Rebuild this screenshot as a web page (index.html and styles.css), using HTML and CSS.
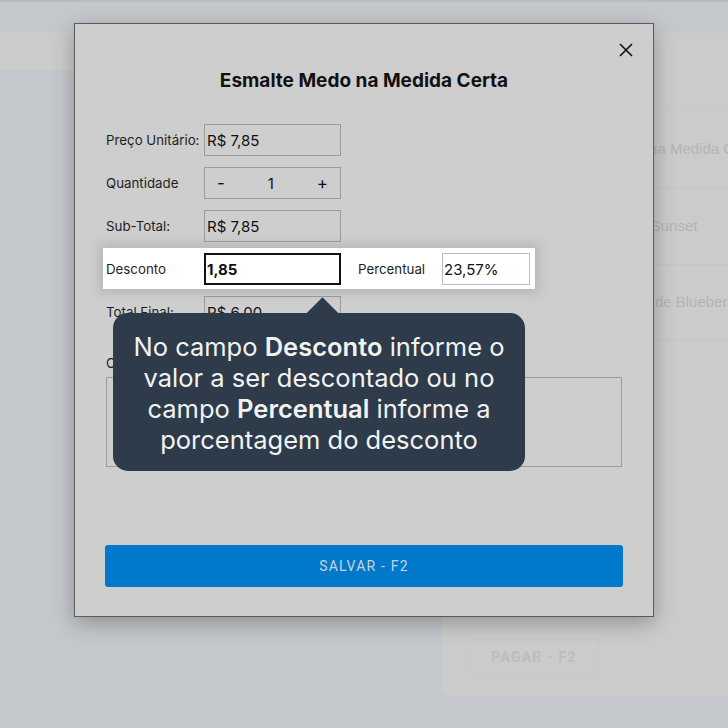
FILE: index.html
```html
<!DOCTYPE html>
<html lang="pt-BR">
<head>
    <meta charset="UTF-8">
    <meta name="viewport" content="width=device-width, initial-scale=1.0">
    <title>PDV - Desconto</title>
    <link rel="stylesheet" href="styles.css">
</head>
<body>
    <div class="topbar"></div>
    <div class="app">
        <div class="catalog">
            <div class="search"></div>
        </div>
        <aside class="cart">
            <ul class="cart-list">
                <li>Esmalte Medo na Medida Certa</li>
                <li>Esmalte Verão Sunset</li>
                <li>Esmalte Geleia de Blueberry</li>
            </ul>
            <div class="cart-footer">
                <button class="pay">PAGAR - F2</button>
            </div>
        </aside>
    </div>

    <div class="modal">
        <button class="close" aria-label="Fechar">
            <svg width="14" height="14" viewBox="0 0 14 14">
                <path d="M1 1 L13 13 M13 1 L1 13" stroke="#111" stroke-width="1.6" fill="none"/>
            </svg>
        </button>
        <h2 class="modal-title">Esmalte Medo na Medida Certa</h2>
        <div class="form">
            <div class="row">
                <label>Preço Unitário:</label>
                <input class="field" type="text" value="R$ 7,85" readonly>
            </div>
            <div class="row">
                <label>Quantidade</label>
                <div class="field qty">
                    <button>-</button>
                    <span>1</span>
                    <button>+</button>
                </div>
            </div>
            <div class="row">
                <label>Sub-Total:</label>
                <input class="field" type="text" value="R$ 7,85" readonly>
            </div>
            <div class="row row-focus">
                <label>Desconto</label>
                <input class="field field-active" type="text" value="1,85">
                <label class="label-short">Percentual</label>
                <input class="field field-small" type="text" value="23,57%">
            </div>
            <div class="row">
                <label>Total Final:</label>
                <input class="field" type="text" value="R$ 6,00" readonly>
            </div>
            <label class="notes-label">Observação</label>
            <textarea class="notes"></textarea>
        </div>
        <button class="save">SALVAR - F2</button>

        <div class="tour-tip">
            No campo <b>Desconto</b> informe o<br>
            valor a ser descontado ou no<br>
            campo <b>Percentual</b> informe a<br>
            porcentagem do desconto
        </div>
    </div>
</body>
</html>
```

FILE: styles.css
```css
body {
    margin: 0;
    width: 728px;
    height: 728px;
    overflow: hidden;
    background: #c4c7cb;
    font-family: Inter, "Liberation Sans", sans-serif;
}

.topbar {
    height: 2px;
    background: #b8bbbf;
}

/* app behind the modal */
.app {
    display: flex;
    gap: 12px;
    padding-top: 30px;
}

.catalog {
    width: 430px;
    flex: none;
}

.search {
    height: 38px;
    background: #cbcbcb;
}

.cart {
    width: 300px;
    height: 663px;
    flex: none;
    margin-top: 1px;
    padding-top: 77px;
    box-sizing: border-box;
    background: #cbcbcb;
    border-radius: 0 0 0 8px;
    display: flex;
    flex-direction: column;
    overflow: hidden;
}

.cart-list {
    list-style: none;
    margin: 0;
    padding: 0;
}

.cart-list li {
    height: 77px;
    box-sizing: border-box;
    display: flex;
    align-items: center;
    padding: 0 0 2px 107px;
    white-space: nowrap;
    font-family: "Liberation Sans", Arial, sans-serif;
    font-size: 15px;
    color: #b4b4b4;
    border-top: 1px solid #c6c6c6;
}

.cart-list li:last-child {
    border-bottom: 1px solid #c6c6c6;
}

.cart-footer {
    margin-top: auto;
    padding: 0 0 21px 26px;
}

.pay {
    width: 132px;
    height: 36px;
    background: transparent;
    border: 1px solid #c8c8c8;
    border-radius: 4px;
    font-family: Roboto, sans-serif;
    font-weight: 700;
    font-size: 14px;
    letter-spacing: 1.2px;
    color: #bdbdbd;
}

/* modal */
.modal {
    position: absolute;
    left: 74px;
    top: 23px;
    width: 580px;
    height: 594px;
    box-sizing: border-box;
    padding: 46px 30px 0;
    background: #cecece;
    border: 1px solid #5b5b5b;
    box-shadow: 0 6px 20px rgba(0, 0, 0, 0.28);
}

.close {
    position: absolute;
    top: 19px;
    right: 20px;
    width: 14px;
    height: 14px;
    padding: 0;
    border: none;
    background: none;
    display: flex;
}

.modal-title {
    margin: 0 0 32px;
    font-size: 19px;
    line-height: 22px;
    font-weight: 700;
    text-align: center;
    color: #111;
}

.form {
    padding: 0 1px;
}

.row {
    display: flex;
    align-items: center;
    height: 32px;
    margin-bottom: 11px;
}

.row label {
    width: 98px;
    flex: none;
    font-size: 13.3px;
    color: #1e1e1e;
}

.field {
    width: 137px;
    height: 32px;
    flex: none;
    box-sizing: border-box;
    margin: 0;
    padding: 0 2px;
    border: 1px solid #9b9b9b;
    border-radius: 0;
    background: transparent;
    font-family: Inter, sans-serif;
    font-size: 15px;
    color: #111;
    outline: none;
}

.qty {
    display: flex;
    align-items: center;
    justify-content: space-between;
    padding: 0 12px;
}

.qty button {
    padding: 0;
    border: none;
    background: none;
    font-family: Inter, sans-serif;
    font-size: 17px;
    color: #111;
}

.qty span {
    font-size: 15px;
}

/* highlighted row of the guided tour */
.row-focus {
    width: 424px;
    height: 32px;
    margin: -5px 0 7px -3px;
    padding: 5px 5px 4px 3px;
    background: #fff;
    box-shadow: 0 0 10px 4px rgba(90, 98, 108, 0.22);
    position: relative;
    z-index: 1;
}

.field-active {
    border: 2px solid #111;
    padding-left: 1px;
    font-weight: 700;
}

.row .label-short {
    width: 84px;
    margin-left: 17px;
}

.field-small {
    width: 88px;
    border-color: #bdbdbd;
    padding-left: 1px;
}

.notes-label {
    display: block;
    margin-top: 27px;
    font-size: 13.3px;
    line-height: 16px;
    color: #1e1e1e;
}

.notes {
    display: block;
    width: 100%;
    height: 90px;
    box-sizing: border-box;
    margin-top: 6px;
    border: 1px solid #9b9b9b;
    background: transparent;
    resize: none;
}

.save {
    display: block;
    width: 100%;
    height: 42px;
    margin-top: 78px;
    border: none;
    border-radius: 3px;
    background: #0079cc;
    color: #c9d3dc;
    font-family: Roboto, sans-serif;
    font-size: 14px;
    letter-spacing: 1.2px;
}

.tour-tip {
    position: absolute;
    left: 38px;
    top: 289px;
    width: 412px;
    box-sizing: border-box;
    padding: 18px 10px 16px;
    background: #2d3b4a;
    border-radius: 15px;
    color: #f2f2f2;
    font-size: 25.5px;
    line-height: 31px;
    text-align: center;
    z-index: 2;
}

.tour-tip b {
    font-weight: 600;
}

.tour-tip::before {
    content: "";
    position: absolute;
    top: -11px;
    left: calc(50% - 8px);
    width: 23px;
    height: 23px;
    background: #2d3b4a;
    transform: rotate(45deg);
}
```
